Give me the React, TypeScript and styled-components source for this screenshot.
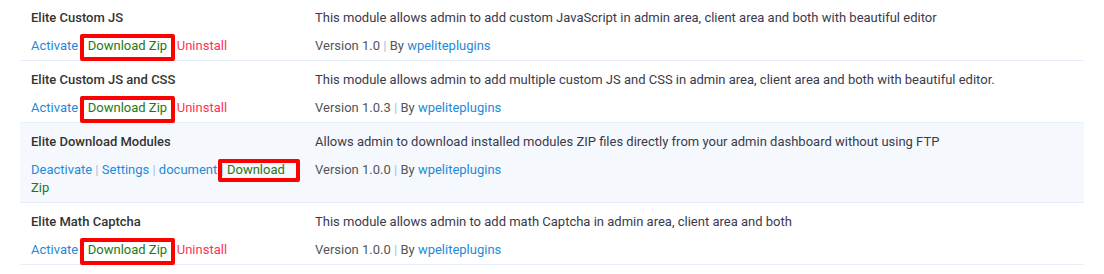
import styled, { createGlobalStyle } from 'styled-components';

type Action = { label: string; kind: 'link' | 'zip' | 'danger'; box?: 'inline' | 'wrap' };

type Module = {
  name: string;
  description: string;
  version: string;
  actions: Action[];
  active?: boolean;
};

const modules: Module[] = [
  {
    name: 'Elite Custom JS',
    description:
      'This module allows admin to add custom JavaScript in admin area, client area and both with beautiful editor',
    version: '1.0',
    actions: [
      { label: 'Activate', kind: 'link' },
      { label: 'Download Zip', kind: 'zip', box: 'inline' },
      { label: 'Uninstall', kind: 'danger' },
    ],
  },
  {
    name: 'Elite Custom JS and CSS',
    description:
      'This module allows admin to add multiple custom JS and CSS in admin area, client area and both with beautiful editor.',
    version: '1.0.3',
    actions: [
      { label: 'Activate', kind: 'link' },
      { label: 'Download Zip', kind: 'zip', box: 'inline' },
      { label: 'Uninstall', kind: 'danger' },
    ],
  },
  {
    name: 'Elite Download Modules',
    description:
      'Allows admin to download installed modules ZIP files directly from your admin dashboard without using FTP',
    version: '1.0.0',
    active: true,
    actions: [
      { label: 'Deactivate', kind: 'link' },
      { label: 'Settings', kind: 'link' },
      { label: 'document', kind: 'link' },
      { label: 'Download Zip', kind: 'zip', box: 'wrap' },
    ],
  },
  {
    name: 'Elite Math Captcha',
    description: 'This module allows admin to add math Captcha in admin area, client area and both',
    version: '1.0.0',
    actions: [
      { label: 'Activate', kind: 'link' },
      { label: 'Download Zip', kind: 'zip', box: 'inline' },
      { label: 'Uninstall', kind: 'danger' },
    ],
  },
];

function ActionLink({ action }: { action: Action }) {
  if (action.kind !== 'zip') {
    return <Link $kind={action.kind}>{action.label}</Link>;
  }
  if (action.box === 'wrap') {
    const [first, rest] = action.label.split(' ');
    return (
      <Link $kind="zip">
        <Marked $box="wrap">{first}</Marked> {rest}
      </Link>
    );
  }
  return (
    <Link $kind="zip">
      <Marked $box="inline">{action.label}</Marked>
    </Link>
  );
}

function App() {
  return (
    <>
      <GlobalStyle />
      <Table>
        {modules.map((m) => (
          <Row key={m.name} $active={m.active}>
            <NameCell>
              <Title>{m.name}</Title>
              <Actions>
                {m.actions.map((a, i) => (
                  <span key={a.label}>
                    {i > 0 && <Sep> | </Sep>}
                    <ActionLink action={a} />
                  </span>
                ))}
              </Actions>
            </NameCell>
            <InfoCell>
              <Description>{m.description}</Description>
              <Meta>
                Version {m.version}
                <Sep> | </Sep>
                By <Link $kind="link">wpeliteplugins</Link>
              </Meta>
            </InfoCell>
          </Row>
        ))}
      </Table>
    </>
  );
}

export default App;

const GlobalStyle = createGlobalStyle`
  body {
    margin: 0;
    background: #fff;
    font-family: Roboto, 'Liberation Sans', Arial, sans-serif;
    font-size: 13px;
    line-height: 18px;
  }
`;

const Table = styled.div`
  width: 1064px;
  margin: -1px 0 0 20px;
`;

const Row = styled.div<{ $active?: boolean }>`
  display: grid;
  grid-template-columns: 284px 1fr;
  border-bottom: 1px solid #e6eff9;
  background-color: ${({ $active }) => ($active ? '#f5f9fe' : '#fff')};
`;

const NameCell = styled.div`
  padding: 10px 11px 5px;
`;

const InfoCell = styled.div`
  padding: 10px 11px 5px;
`;

const Title = styled.div`
  font-weight: 500;
  color: #333;
  margin-bottom: 10px;
`;

const Actions = styled.div`
  color: #333;
`;

const colors = {
  link: '#1e8ad8',
  zip: '#1f7814',
  danger: '#ff3358',
};

const Link = styled.a<{ $kind: 'link' | 'zip' | 'danger' }>`
  color: ${({ $kind }) => colors[$kind]};
  text-decoration: none;
  cursor: pointer;
`;

const Sep = styled.span`
  color: #9fc0de;
`;

const Marked = styled.span<{ $box: 'inline' | 'wrap' }>`
  position: relative;

  &::after {
    content: '';
    position: absolute;
    border: 4px solid #ff0000;
    border-radius: 2px;
    top: ${({ $box }) => ($box === 'wrap' ? '-3px' : '-4px')};
    bottom: ${({ $box }) => ($box === 'wrap' ? '-5px' : '-8px')};
    left: ${({ $box }) => ($box === 'wrap' ? '-9px' : '-8px')};
    right: ${({ $box }) => ($box === 'wrap' ? '-15px' : '-8px')};
    pointer-events: none;
  }
`;

const Description = styled.div`
  color: #3a3a4c;
  margin-bottom: 10px;
`;

const Meta = styled.div`
  color: #555;
`;
